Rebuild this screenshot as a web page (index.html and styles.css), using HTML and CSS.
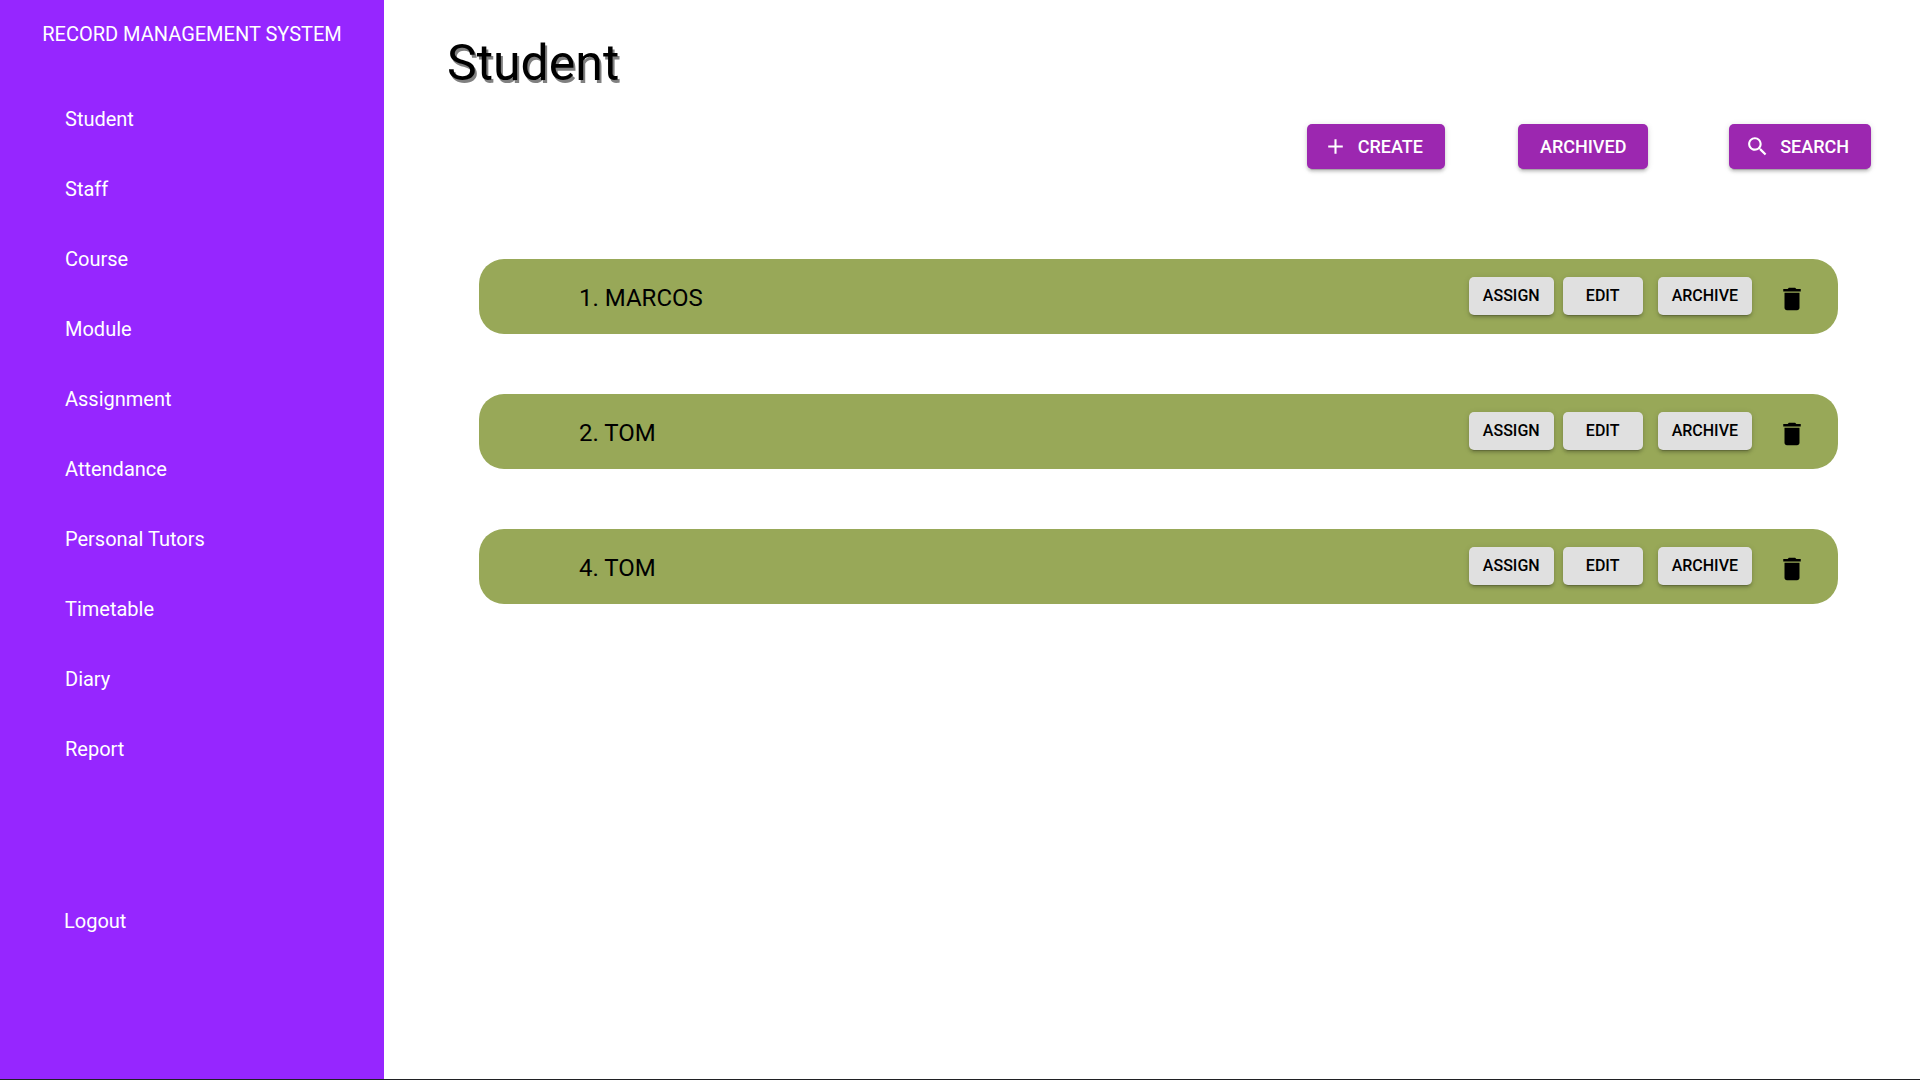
FILE: index.html
```html
<!DOCTYPE html>
<html lang="en">
<head>
<meta charset="utf-8">
<meta name="viewport" content="width=device-width, initial-scale=1">
<title>Student - Record Management System</title>
<link rel="stylesheet" href="styles.css">
</head>
<body>
<svg class="sprite" aria-hidden="true">
  <symbol id="icon-add" viewBox="0 0 24 24"><path d="M19 13h-6v6h-2v-6H5v-2h6V5h2v6h6v2z"/></symbol>
  <symbol id="icon-search" viewBox="0 0 24 24"><path d="M15.5 14h-.79l-.28-.27C15.41 12.59 16 11.11 16 9.5 16 5.91 13.09 3 9.5 3S3 5.91 3 9.5 5.91 16 9.5 16c1.61 0 3.09-.59 4.23-1.57l.27.28v.79l5 4.99L20.49 19l-4.99-5zm-6 0C7.01 14 5 11.99 5 9.5S7.01 5 9.5 5 14 7.01 14 9.5 11.99 14 9.5 14z"/></symbol>
  <symbol id="icon-delete" viewBox="0 0 24 24"><path d="M6 19c0 1.1.9 2 2 2h8c1.1 0 2-.9 2-2V7H6v12zM19 4h-3.500l-1-1h-5l-1 1H5v2h14V4z"/></symbol>
</svg>
<div class="layout">
  <aside class="sidebar">
    <p class="brand">RECORD MANAGEMENT SYSTEM</p>
    <nav class="menu" aria-label="Main">
      <a href="#student">Student</a>
      <a href="#staff">Staff</a>
      <a href="#course">Course</a>
      <a href="#module">Module</a>
      <a href="#assignment">Assignment</a>
      <a href="#attendance">Attendance</a>
      <a href="#tutors">Personal Tutors</a>
      <a href="#timetable">Timetable</a>
      <a href="#diary">Diary</a>
      <a href="#report">Report</a>
    </nav>
    <a class="logout" href="#logout">Logout</a>
  </aside>
  <main class="content">
    <h1 class="title">Student</h1>
    <div class="toolbar">
      <button class="button primary" type="button"><svg class="button-icon" aria-hidden="true"><use href="#icon-add"/></svg>CREATE</button>
      <button class="button primary" type="button">ARCHIVED</button>
      <button class="button primary" type="button"><svg class="button-icon" aria-hidden="true"><use href="#icon-search"/></svg>SEARCH</button>
    </div>
    <ul class="records">
      <li class="record">
        <span class="name">1. MARCOS</span>
        <div class="actions">
          <button class="button small" type="button">ASSIGN</button>
          <button class="button small" type="button">EDIT</button>
          <button class="button small archive" type="button">ARCHIVE</button>
          <button class="delete" type="button" aria-label="Delete"><svg class="delete-icon" aria-hidden="true"><use href="#icon-delete"/></svg></button>
        </div>
      </li>
      <li class="record">
        <span class="name">2. TOM</span>
        <div class="actions">
          <button class="button small" type="button">ASSIGN</button>
          <button class="button small" type="button">EDIT</button>
          <button class="button small archive" type="button">ARCHIVE</button>
          <button class="delete" type="button" aria-label="Delete"><svg class="delete-icon" aria-hidden="true"><use href="#icon-delete"/></svg></button>
        </div>
      </li>
      <li class="record">
        <span class="name">4. TOM</span>
        <div class="actions">
          <button class="button small" type="button">ASSIGN</button>
          <button class="button small" type="button">EDIT</button>
          <button class="button small archive" type="button">ARCHIVE</button>
          <button class="delete" type="button" aria-label="Delete"><svg class="delete-icon" aria-hidden="true"><use href="#icon-delete"/></svg></button>
        </div>
      </li>
    </ul>
  </main>
</div>
</body>
</html>
```
FILE: styles.css
```css
* {
  box-sizing: border-box;
}

body {
  margin: 0;
  font-family: Roboto, "Liberation Sans", sans-serif;
  font-size: 20px;
  line-height: 30px;
  color: #000;
  background: #fff;
}

.sprite {
  display: none;
}

.layout {
  display: grid;
  grid-template-columns: 20% 1fr;
  min-height: 100vh;
  border-bottom: 1px solid #202124;
}

.sidebar {
  display: flex;
  flex-direction: column;
  padding-top: 19px;
  color: #fff;
  background: #9626ff;
}

.sidebar a {
  color: inherit;
  text-decoration: none;
}

.brand {
  margin: 0;
  text-align: center;
}

.menu {
  display: grid;
  gap: 40px;
  padding: 55px 65px 0;
}

.logout {
  margin: 142px 64px 0;
}

.content {
  padding: 33px 0 60px;
}

.title {
  margin: 0 63px;
  font-size: 50px;
  font-weight: 400;
  line-height: 60px;
  text-shadow: 2px 3px #808080;
}

.toolbar {
  display: grid;
  grid-template-columns: 11vw 11vw auto;
  justify-content: end;
  justify-items: start;
  padding: 31px 49px 0 0;
}

.button {
  display: flex;
  align-items: center;
  justify-content: center;
  border: 0;
  border-radius: 5px;
  font-family: inherit;
  font-weight: 500;
  box-shadow: 0 4px 1px -3px rgba(0, 0, 0, 0.2), 0 3px 3px rgba(0, 0, 0, 0.14), 0 1px 6px rgba(0, 0, 0, 0.12);
}

.primary {
  height: 45px;
  padding: 0 22px;
  font-size: 18px;
  color: #fff;
  background: #9c27b0;
}

.button-icon {
  width: 25px;
  height: 25px;
  margin: 0 10px 0 -6px;
  fill: currentColor;
}

.records {
  display: grid;
  gap: 60px;
  margin: 0;
  padding: 90px 82px 0 95px;
  list-style: none;
}

.record {
  display: flex;
  align-items: center;
  justify-content: space-between;
  height: 75px;
  padding: 0 31px 0 100px;
  border-radius: 25px;
  background: #98a858;
}

.name {
  padding-top: 2px;
  font-size: 24px;
}

.actions {
  display: flex;
  align-items: center;
  gap: 9px;
  padding-bottom: 2px;
}

.small {
  min-width: 80px;
  height: 38px;
  padding: 0 14px;
  font-size: 16px;
  color: #000;
  background: #e0e0e0;
}

.archive {
  margin-left: 6px;
}

.delete {
  display: flex;
  margin-left: 16px;
  padding: 6px 0 0;
  border: 0;
  background: none;
}

.delete-icon {
  width: 30px;
  height: 30px;
}
```
